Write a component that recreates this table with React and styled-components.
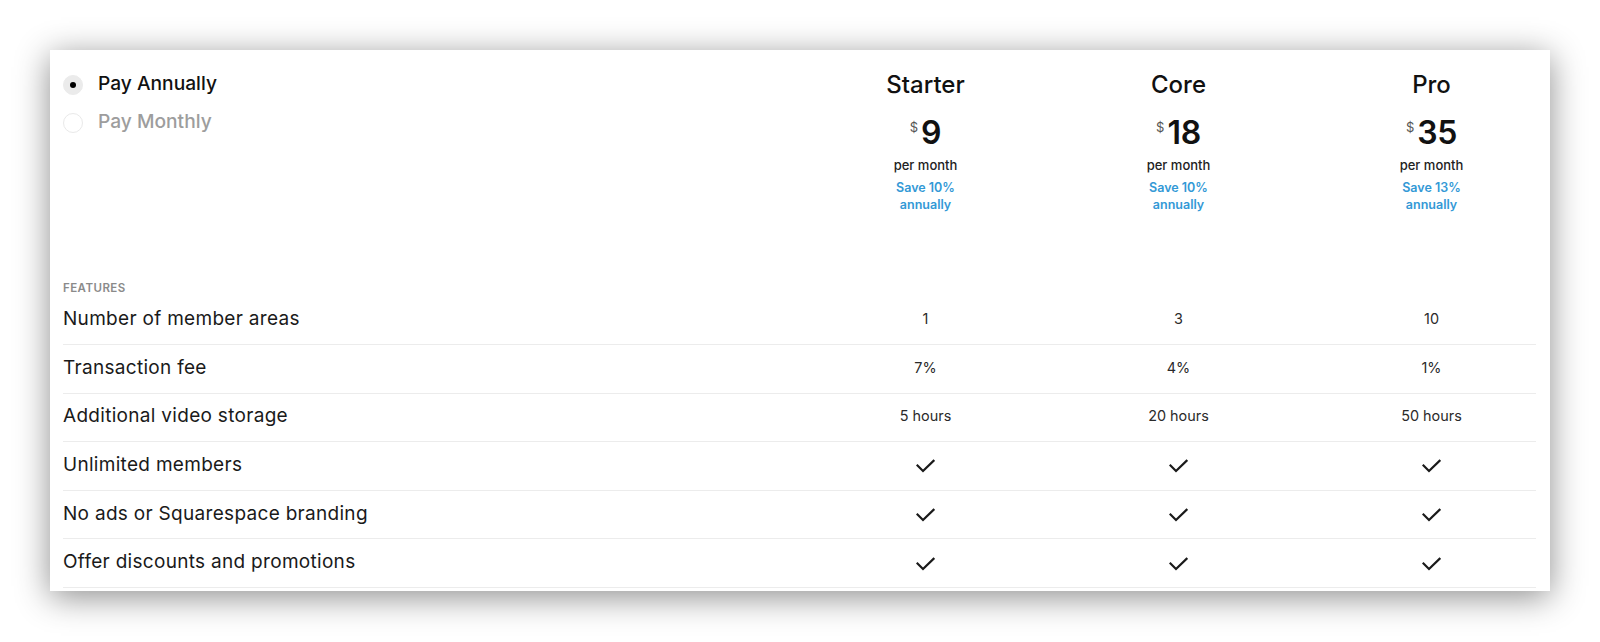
import React from "react";
import styled, { createGlobalStyle } from "styled-components";

const GlobalStyle = createGlobalStyle`
  html, body { margin: 0; padding: 0; background: #ffffff; }
  body { font-family: Inter, "Noto Sans", "Liberation Sans", sans-serif; color: #111; }
  * { box-sizing: border-box; }
`;

const Page = styled.div`
  padding: 50px 50px 51px 50px;
`;

const Card = styled.div`
  width: 1500px;
  background: #fff;
  box-shadow: 0 6px 32px rgba(0, 0, 0, 0.45);
  padding: 0 14px 3px 13px;
`;

const Grid = styled.div`
  display: grid;
  grid-template-columns: 1fr repeat(3, 253px);
`;

const Header = styled(Grid)`
  padding-top: 20px;
  height: 231.5px;
`;

const RadioGroup = styled.div`
  display: flex;
  flex-direction: column;
  gap: 14px;
  padding-top: 1px;
`;

const RadioRow = styled.label`
  display: flex;
  align-items: center;
  gap: 15px;
  font-size: 19.2px;
  line-height: 24px;
  font-weight: 500;
  color: ${(p) => (p.$active ? "#111" : "#9d9d9d")};
`;

const RadioCircle = styled.span`
  width: 20px;
  height: 20px;
  border-radius: 50%;
  margin-top: 4px;
  display: flex;
  align-items: center;
  justify-content: center;
  background: ${(p) => (p.$active ? "#ebebeb" : "#fff")};
  border: 1px solid ${(p) => (p.$active ? "#ebebeb" : "#e9e9e9")};
  &::after {
    content: "";
    width: 6px;
    height: 6px;
    border-radius: 50%;
    background: #000;
    display: ${(p) => (p.$active ? "block" : "none")};
  }
`;

const PlanCell = styled.div`
  padding-left: 44px;
  display: flex;
  flex-direction: column;
  align-items: center;
  text-align: center;
`;

const PlanName = styled.div`
  font-size: 24px;
  line-height: 28.8px;
  font-weight: 500;
  color: #111;
  margin-top: 1px;
`;

const PriceRow = styled.div`
  display: flex;
  align-items: flex-start;
  gap: 3px;
  margin-top: 17.5px;
  height: 32px;
`;

const Dollar = styled.span`
  font-size: 13px;
  line-height: 13px;
  color: #555;
  margin-top: 4px;
`;

const Amount = styled.span`
  font-size: 32px;
  line-height: 32px;
  font-weight: 600;
  color: #111;
  letter-spacing: -0.3px;
`;

const PerMonth = styled.div`
  margin-top: 7.4px;
  font-size: 13px;
  line-height: 17px;
  font-weight: 500;
  color: #222;
`;

const Save = styled.div`
  margin-top: 5px;
  font-size: 12.5px;
  line-height: 17px;
  font-weight: 600;
  color: #3399d6;
`;

const SectionLabel = styled.div`
  font-size: 11.5px;
  line-height: 13px;
  font-weight: 600;
  color: #8a8a8a;
  text-transform: uppercase;
  letter-spacing: 0.45px;
  margin-bottom: 1.9px;
`;

const Row = styled(Grid)`
  height: 48.6px;
  align-items: center;
  border-bottom: 1px solid #ececec;
`;

const FeatureName = styled.div`
  font-size: 19px;
  letter-spacing: 0.3px;
  color: #1a1a1a;
  padding-bottom: 3px;
`;

const Value = styled.div`
  padding-left: 44px;
  padding-bottom: 3px;
  display: flex;
  justify-content: center;
  font-size: 14.4px;
  color: #2a2a2a;
`;

const CheckSvg = styled.svg`
  display: block;
  margin-top: 5px;
`;

const Check = () => (
  <CheckSvg width="19" height="15" viewBox="0 0 19 15" fill="none">
    <path d="M1.5 6.5 L7 12 L17.5 1.8" stroke="#1a1a1a" strokeWidth="2.2" strokeLinecap="square" />
  </CheckSvg>
);

const plans = [
  { name: "Starter", price: "9", save: "Save 10%" },
  { name: "Core", price: "18", save: "Save 10%" },
  { name: "Pro", price: "35", save: "Save 13%" },
];

const features = [
  { name: "Number of member areas", values: ["1", "3", "10"] },
  { name: "Transaction fee", values: ["7%", "4%", "1%"] },
  { name: "Additional video storage", values: ["5 hours", "20 hours", "50 hours"] },
  { name: "Unlimited members", values: [true, true, true] },
  { name: "No ads or Squarespace branding", values: [true, true, true] },
  { name: "Offer discounts and promotions", values: [true, true, true] },
];

export default function App() {
  return (
    <>
      <GlobalStyle />
      <Page>
        <Card>
          <Header>
            <RadioGroup>
              <RadioRow $active>
                <RadioCircle $active />
                Pay Annually
              </RadioRow>
              <RadioRow>
                <RadioCircle />
                Pay Monthly
              </RadioRow>
            </RadioGroup>
            {plans.map((p) => (
              <PlanCell key={p.name}>
                <PlanName>{p.name}</PlanName>
                <PriceRow>
                  <Dollar>$</Dollar>
                  <Amount>{p.price}</Amount>
                </PriceRow>
                <PerMonth>per month</PerMonth>
                <Save>
                  {p.save}
                  <br />
                  annually
                </Save>
              </PlanCell>
            ))}
          </Header>
          <SectionLabel>Features</SectionLabel>
          {features.map((f) => (
            <Row key={f.name}>
              <FeatureName>{f.name}</FeatureName>
              {f.values.map((v, i) => (
                <Value key={i}>{v === true ? <Check /> : v}</Value>
              ))}
            </Row>
          ))}
        </Card>
      </Page>
    </>
  );
}
